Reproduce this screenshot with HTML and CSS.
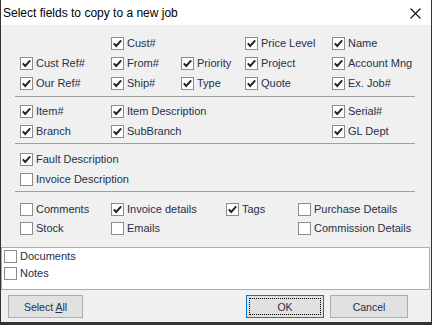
FILE: index.html
```html
<!DOCTYPE html>
<html lang="en">
  <head>
    <meta charset="UTF-8" />
    <title>Select fields to copy to a new job</title>
    <link rel="stylesheet" href="styles.css">
  </head>
  <body>
    <div class="window">
      <!-- title bar -->
      <div class="titlebar">
        <span class="title">Select fields to copy to a new job</span>
        <svg class="close" width="11" height="11" viewBox="0 0 11 11">
          <path d="M0.5 0.5 L10.5 10.5 M10.5 0.5 L0.5 10.5" stroke="#111" stroke-width="1.1" fill="none" />
        </svg>
      </div>

      <div class="content">
        <!-- job header fields -->
        <div class="group g-head">
          <span></span>
          <label class="cb"><span class="box on"></span>Cust#</label>
          <span></span>
          <label class="cb"><span class="box on"></span>Price Level</label>
          <label class="cb"><span class="box on"></span>Name</label>

          <label class="cb"><span class="box on"></span>Cust Ref#</label>
          <label class="cb"><span class="box on"></span>From#</label>
          <label class="cb"><span class="box on"></span>Priority</label>
          <label class="cb"><span class="box on"></span>Project</label>
          <label class="cb"><span class="box on"></span>Account Mng</label>

          <label class="cb"><span class="box on"></span>Our Ref#</label>
          <label class="cb"><span class="box on"></span>Ship#</label>
          <label class="cb"><span class="box on"></span>Type</label>
          <label class="cb"><span class="box on"></span>Quote</label>
          <label class="cb"><span class="box on"></span>Ex. Job#</label>
        </div>
        <div class="sep sep-1"></div>

        <!-- item fields -->
        <div class="group g-item">
          <label class="cb"><span class="box on"></span>Item#</label>
          <label class="cb"><span class="box on"></span>Item Description</label>
          <label class="cb"><span class="box on"></span>Serial#</label>
          <label class="cb"><span class="box on"></span>Branch</label>
          <label class="cb"><span class="box on"></span>SubBranch</label>
          <label class="cb"><span class="box on"></span>GL Dept</label>
        </div>
        <div class="sep sep-2"></div>

        <!-- descriptions -->
        <div class="group g-desc">
          <label class="cb"><span class="box on"></span>Fault Description</label>
          <label class="cb"><span class="box"></span>Invoice Description</label>
        </div>
        <div class="sep sep-3"></div>

        <!-- other -->
        <div class="group g-misc">
          <label class="cb"><span class="box"></span>Comments</label>
          <label class="cb"><span class="box on"></span>Invoice details</label>
          <label class="cb"><span class="box on"></span>Tags</label>
          <label class="cb"><span class="box"></span>Purchase Details</label>

          <label class="cb"><span class="box"></span>Stock</label>
          <label class="cb"><span class="box"></span>Emails</label>
          <span></span>
          <label class="cb"><span class="box"></span>Commission Details</label>
        </div>
      </div>

      <div class="extras">
        <label class="cb cb-small"><span class="box"></span>Documents</label>
        <label class="cb cb-small"><span class="box"></span>Notes</label>
      </div>

      <div class="buttons">
        <button class="btn btn-select">Select <u>A</u>ll</button>
        <button class="btn btn-ok">OK</button>
        <button class="btn btn-cancel">Cancel</button>
      </div>
    </div>
  </body>
</html>
```

FILE: styles.css
```css
body {
  margin: 0;
  padding: 0;
  background: #fff;
  font-family: "Liberation Sans", Arial, sans-serif;
}
.window {
  width: 432px;
  height: 325px;
  box-sizing: border-box;
  border-left: 1px solid #333;
  border-right: 1px solid #333;
  border-bottom: 3px solid #333;
  background: #f0f0f0;
}
.titlebar {
  height: 25px;
  background: #fff;
  display: flex;
  align-items: center;
  justify-content: space-between;
  padding: 0 10px 0 2px;
}
.title {
  font-size: 12px;
  color: #000;
}
.close {
  display: block;
  margin-top: 1px;
}
.content {
  padding: 9px 0 0 19px;
}
.group {
  display: grid;
  grid-auto-rows: 20px;
}
.g-head {
  grid-template-columns: 91px 70px 64px 87px auto;
}
.g-item {
  grid-template-columns: 91px 221px auto;
}
.g-desc {
  grid-template-columns: auto;
}
.g-misc {
  grid-template-columns: 91px 115px 72px auto;
  grid-auto-rows: 19px;
}
.sep {
  width: 400px;
  height: 1px;
  background: #a0a0a0;
  margin-left: -5px;
}
.sep-1 {
  margin-top: 2px;
  margin-bottom: 5px;
}
.sep-2 {
  margin-top: 1px;
  margin-bottom: 6px;
}
.sep-3 {
  margin-top: 1px;
  margin-bottom: 8px;
}
.cb {
  display: flex;
  align-items: flex-start;
  padding-top: 3px;
  box-sizing: border-box;
  font-size: 11px;
  line-height: 13px;
  color: #24304c;
  white-space: nowrap;
}
.box {
  flex: none;
  width: 13px;
  height: 13px;
  box-sizing: border-box;
  border: 1px solid #8c8c8c;
  background: #fff;
  margin-right: 3px;
}
.box.on {
  background: #fff url("data:image/svg+xml,%3Csvg xmlns='http://www.w3.org/2000/svg' width='11' height='11' viewBox='0 0 11 11'%3E%3Cpath d='M1.8 5.4 L4.2 8 L9.2 2.4' stroke='%23222' stroke-width='1.9' fill='none'/%3E%3C/svg%3E") no-repeat center;
}
.extras {
  margin: 9px 1px 0 0;
  height: 43px;
  box-sizing: border-box;
  border: 1px solid #adadad;
  background: #fff;
  padding: 2px 0 0 2px;
}
.cb-small {
  height: 17px;
  padding-top: 0;
}
.buttons {
  display: flex;
  padding: 5px 23px 0 7px;
}
.btn {
  position: relative;
  height: 23px;
  box-sizing: border-box;
  border: 1px solid #adadad;
  background: #e1e1e1;
  font-family: "Liberation Sans", Arial, sans-serif;
  font-size: 10.5px;
  color: #24304c;
  padding: 0;
}
.btn-select {
  width: 75px;
}
.btn-ok {
  width: 78px;
  margin-left: auto;
  border-color: #0078d7;
}
.btn-ok::after {
  content: "";
  position: absolute;
  top: 2px;
  left: 2px;
  right: 2px;
  bottom: 2px;
  border: 1px dotted #000;
}
.btn-cancel {
  width: 78px;
  margin-left: 6px;
}
```
